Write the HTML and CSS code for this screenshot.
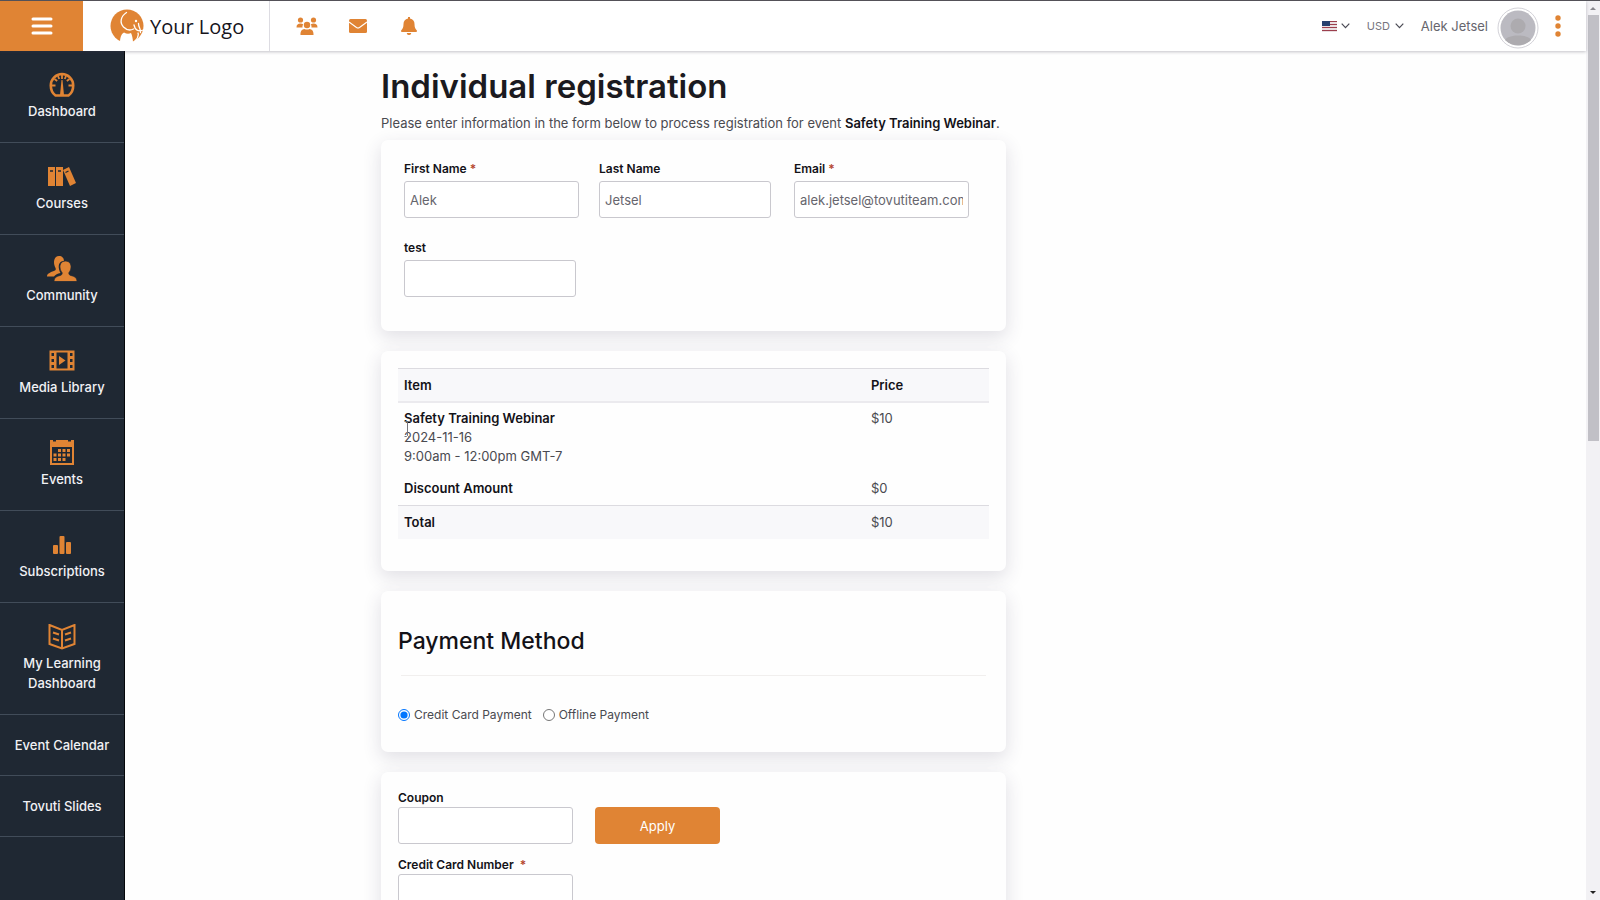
FILE: index.html
```html
<!DOCTYPE html>
<html lang="en">

<head>
  <meta charset="UTF-8">
  <meta name="viewport" content="width=device-width, initial-scale=1.0">
  <title>Individual registration</title>
  <link rel="stylesheet" href="styles.css">
</head>

<body>
  <div class="app">
    <header class="topbar">
      <button class="menu-toggle" type="button" aria-label="Menu">
        <svg width="22" height="20" viewBox="0 0 22 20" stroke="#fff" stroke-width="3" stroke-linecap="round">
          <path d="M2 3h18M2 10h18M2 17h18" />
        </svg>
      </button>
      <a class="logo" href="#">
        <svg width="34" height="34" viewBox="0 0 34 34">
          <circle cx="17" cy="17" r="16.500" fill="#e08434" />
          <path d="M10 34c0-5 1-9 4-10.500 2.500 1.500 5 1.500 7 .500 1 2 2 6 2 10z" fill="#fff" />
          <path d="M16.500 3.500c-6 4-7 10-3 14.500 3 3 7 3.500 10 2" fill="none" stroke="#fff" stroke-width="1.300" stroke-linecap="round" />
          <path d="M24 16c1 5 4 7 9.500 5M28.500 14.500c0 4 2.500 5.500 2 9M28 24c1 3 0 5-3 8" fill="none" stroke="#fff" stroke-width="1.300" stroke-linecap="round" />
          <circle cx="26" cy="12" r="1.200" fill="#fff" />
        </svg>
        <span>Your Logo</span>
      </a>
      <nav class="shortcuts">
        <a href="#" aria-label="People">
          <svg width="22" height="18" viewBox="0 0 22 18" fill="#e08434">
            <circle cx="4.500" cy="3" r="2.600" />
            <circle cx="17.500" cy="3" r="2.600" />
            <path d="M.500 10.500c0-3 1.500-4 4-4 1 0 2 .200 2.800.900-.900 1-1 2.200-.700 3.100zM21.500 10.500c0-3-1.500-4-4-4-1 0-2 .200-2.800.900.900 1 1 2.200.700 3.100z" />
            <circle cx="11" cy="8" r="3.200" />
            <path d="M4.500 18c-.300-4 1.500-6 4-6.100 1.500.900 3.500.900 5 0 2.500.100 4.300 2.100 4 6.100z" />
          </svg>
        </a>
        <a href="#" aria-label="Messages">
          <svg width="18" height="14" viewBox="0 0 18 14">
            <rect width="18" height="14" rx="1.500" fill="#e08434" />
            <path d="M0 3l7.500 5.500q1.500 1 3 0L18 3" fill="none" stroke="#fff" stroke-width="1.100" />
          </svg>
        </a>
        <a href="#" aria-label="Notifications">
          <svg width="16" height="18" viewBox="0 0 16 18" fill="#e08434">
            <path d="M7 0h2v1.600c3 .600 4.500 2.800 4.500 5.400 0 3.500.800 4.800 2 6 .900.900.400 2-.700 2H1.200c-1.100 0-1.600-1.100-.700-2 1.200-1.200 2-2.500 2-6C2.500 4.400 4 2.200 7 1.600zM5.800 16h4.400c0 2.700-4.400 2.700-4.400 0z" />
          </svg>
        </a>
      </nav>
      <div class="account">
        <button class="language" type="button" aria-label="Language">
          <svg width="15" height="11" viewBox="0 0 15 11">
            <rect width="15" height="11" fill="#e9dfe2" />
            <path d="M0 .500h15M0 3.500h15M0 6.500h15M0 9.500h15" stroke="#9c3f4d" />
            <rect width="8" height="5" fill="#26406e" />
          </svg>
          <svg width="9" height="6" viewBox="0 0 9 6" fill="none" stroke="#4b4b55" stroke-width="1.200">
            <path d="M.700.700l3.800 4 3.800-4" />
          </svg>
        </button>
        <div class="currency">
          <select aria-label="Currency">
            <option>USD</option>
          </select>
          <svg width="9" height="6" viewBox="0 0 9 6" fill="none" stroke="#4b4b55" stroke-width="1.200">
            <path d="M.700.700l3.800 4 3.800-4" />
          </svg>
        </div>
        <a class="user" href="#">
          <span>Alek Jetsel</span>
          <svg class="avatar" width="42" height="42" viewBox="0 0 42 42">
            <circle cx="21" cy="21" r="20" fill="#fff" stroke="#d3d2d8" />
            <circle cx="21" cy="21" r="17.500" fill="#bbbac1" />
            <circle cx="21" cy="19" r="7.500" fill="#adabaf" />
            <path d="M8 33c3-6 23-6 26 0-7 7-19 7-26 0z" fill="#adabaf" />
          </svg>
        </a>
        <button class="more" type="button" aria-label="More">
          <svg width="6" height="22" viewBox="0 0 6 22" fill="#e08434">
            <circle cx="3" cy="3" r="2.700" />
            <circle cx="3" cy="11" r="2.700" />
            <circle cx="3" cy="19" r="2.700" />
          </svg>
        </button>
      </div>
    </header>

    <nav class="sidebar">
      <a href="#">
        <svg width="26" height="26" viewBox="0 0 26 26" fill="none" stroke="#e08434" stroke-width="2.600">
          <path d="M6.500 23.500C3 21 1.800 17 1.800 13.500 1.800 7 7 2 13 2s11.200 5 11.200 11.500c0 3.500-1.200 7.500-4.700 10z" />
          <path d="M13 3v4M3 13.500h3.500M19.500 13.500H23M5.500 7l2.700 2M20.500 7l-2.700 2M9 4l1.200 3M17 4l-1.200 3" stroke-width="1.800" />
          <path d="M12.500 8h1l1.500 15h-4z" fill="#e08434" stroke="none" />
        </svg>
        <span>Dashboard</span>
      </a>
      <a href="#">
        <svg width="28" height="26" viewBox="0 0 28 26">
          <g fill="#e08434">
            <rect x="0" y="3" width="7" height="19" />
            <rect x="8" y="3" width="7" height="19" />
            <path d="M15 6l6-3 7 16-6 3z" />
          </g>
          <path d="M2 7h3M10 7h3M17.500 8.500l3-1.500" stroke="#1f2833" stroke-width="1.300" />
        </svg>
        <span>Courses</span>
      </a>
      <a href="#">
        <svg width="30" height="26" viewBox="0 0 30 26">
          <path d="M12 0c3 0 5 2 5 5-4 0-6 3-5 8 .400 2 1 3 1.500 4-3 .500-5 1.500-6.500 3.500H0c0-3 3-4 8-6 1-.500 1-2 0-3.500C6 6 7 0 12 0z" fill="#e08434" />
          <path d="M18.500 5c4 0 6 3 5.500 7-.300 2-1.200 3.500-2 4.500-.500 2 .500 2.500 2 3 4 1 6 2.500 6 6H7c0-3.500 2-5 6-6 1.500-.500 2.500-1 2-3-.800-1-1.700-2.500-2-4.500-.500-4 1.500-7 5.500-7z" fill="#e08434" stroke="#1f2833" stroke-width=".800" />
        </svg>
        <span>Community</span>
      </a>
      <a href="#">
        <svg width="26" height="26" viewBox="0 0 26 26" fill="#e08434">
          <path fill-rule="evenodd" d="M.500 2.500h25v20H.500zM7.500 4.500v16h11v-16zM2.500 5v3H5V5zM2.500 11v3H5v-3zM2.500 17v3H5v-3zM21 5v3h2.500V5zM21 11v3h2.500v-3zM21 17v3h2.500v-3z" />
          <path d="M10 8l6.500 4.500L10 17z" />
        </svg>
        <span>Media Library</span>
      </a>
      <a href="#">
        <svg width="26" height="26" viewBox="0 0 26 26" fill="#e08434">
          <path fill-rule="evenodd" d="M1 0h3v1.500h3V0h12v1.500h3V0h3v25H1zM3 7v16h20V7z" />
          <path d="M9 9h3v3H9zM13.500 9h3v3h-3zM18 9h3v3h-3zM4.500 13.500h3v3h-3zM9 13.500h3v3H9zM13.500 13.500h3v3h-3zM18 13.500h3v3h-3zM4.500 18h3v3h-3zM9 18h3v3H9zM13.500 18h3v3h-3z" />
        </svg>
        <span>Events</span>
      </a>
      <a href="#">
        <svg width="26" height="26" viewBox="0 0 26 26" fill="#e08434">
          <rect x="4" y="13" width="5" height="9" rx="1" />
          <rect x="10.500" y="4" width="5" height="18" rx="1" />
          <rect x="17" y="10" width="5" height="12" rx="1" />
        </svg>
        <span>Subscriptions</span>
      </a>
      <a href="#">
        <svg width="28" height="26" viewBox="0 0 28 26" fill="none" stroke="#e08434" stroke-width="2">
          <path d="M1.500 1L14 6l12.500-5v19L14 24.500 1.500 20zM14 6v18.500" />
          <path d="M5 8.500l6 2M5 14.500l6 2M23 8.500l-6 2M23 14.500l-6 2" />
        </svg>
        <span>My Learning Dashboard</span>
      </a>
      <a class="text-only" href="#">Event Calendar</a>
      <a class="text-only" href="#">Tovuti Slides</a>
    </nav>

    <main class="content">
      <form class="registration">
        <h1>Individual registration</h1>
        <p class="intro">Please enter information in the form below to process registration for event <strong>Safety Training Webinar</strong>.</p>

        <section class="card details">
          <div class="field">
            <label for="first-name">First Name <span class="required">*</span></label>
            <input id="first-name" type="text" value="Alek">
          </div>
          <div class="field narrow">
            <label for="last-name">Last Name</label>
            <input id="last-name" type="text" value="Jetsel">
          </div>
          <div class="field">
            <label for="email">Email <span class="required">*</span></label>
            <input id="email" type="text" value="alek.jetsel@tovutiteam.com">
          </div>
          <div class="field narrow">
            <label for="test">test</label>
            <input id="test" type="text">
          </div>
        </section>

        <section class="card order">
          <table>
            <thead>
              <tr>
                <th>Item</th>
                <th class="price">Price</th>
              </tr>
            </thead>
            <tbody>
              <tr class="item">
                <td><strong>Safety Training Webinar</strong><br>2024-11-16<br>9:00am - 12:00pm GMT-7</td>
                <td>$10</td>
              </tr>
              <tr>
                <td><strong>Discount Amount</strong></td>
                <td>$0</td>
              </tr>
              <tr class="total">
                <td><strong>Total</strong></td>
                <td>$10</td>
              </tr>
            </tbody>
          </table>
          <svg class="text-cursor" width="7" height="16" viewBox="0 0 7 16" fill="none" stroke="#77767c">
            <path d="M.500.500h2l1 1 1-1h2M3.500 1.500v13M.500 15.500h2l1-1 1 1h2" />
          </svg>
        </section>

        <section class="card payment">
          <h2>Payment Method</h2>
          <hr>
          <div class="options">
            <label><input type="radio" name="method" checked>Credit Card Payment</label>
            <label><input type="radio" name="method">Offline Payment</label>
          </div>
        </section>

        <section class="card billing">
          <div class="coupon">
            <div class="field">
              <label for="coupon">Coupon</label>
              <input id="coupon" type="text">
            </div>
            <button class="apply" type="button">Apply</button>
          </div>
          <div class="field">
            <label for="card-number">Credit Card Number &nbsp;<span class="required">*</span></label>
            <input id="card-number" type="text">
          </div>
        </section>
      </form>
    </main>

    <div class="scrollbar">
      <span class="arrow-up"></span>
      <span class="thumb"></span>
      <span class="arrow-down"></span>
    </div>
  </div>
</body>

</html>
```

FILE: styles.css
```css
* {
  box-sizing: border-box;
}

body {
  margin: 0;
  background: #fefefe;
  font-family: Inter, Arial, sans-serif;
  font-size: 13px;
  line-height: 19px;
  color: #4a4a50;
  overflow: hidden;
}

a {
  color: inherit;
  text-decoration: none;
}

button {
  border: none;
  background: none;
  padding: 0;
  font-family: inherit;
  cursor: pointer;
}

svg {
  display: block;
  flex: none;
}

.app {
  display: grid;
  grid-template-columns: 125px 1fr 14px;
  grid-template-rows: 50px 1fr;
  height: 100vh;
  border-top: 1px solid #55545a;
}

.topbar {
  grid-column: 1 / 3;
  display: flex;
  background: #fff;
  box-shadow: 0 1px 3px rgba(60, 55, 75, 0.3);
  z-index: 2;
}

.menu-toggle {
  display: flex;
  align-items: center;
  justify-content: center;
  width: 83px;
  background: #e08434;
}

.logo {
  display: flex;
  align-items: center;
  gap: 6px;
  padding: 0 25px 0 27px;
  border-right: 1px solid #dddce2;
  font-family: "Open Sans", sans-serif;
  font-size: 20px;
  color: #16151c;
}

.shortcuts {
  display: flex;
  align-items: center;
  padding-left: 11px;
}

.shortcuts a {
  display: flex;
  justify-content: center;
  width: 51px;
}

.account {
  display: flex;
  align-items: center;
  margin-left: auto;
  padding-right: 25px;
}

.language,
.currency {
  display: flex;
  align-items: center;
  gap: 4px;
  margin-right: 17px;
}

.currency select {
  appearance: none;
  border: none;
  padding: 0;
  background: none;
  font-family: inherit;
  font-size: 11px;
  color: #77767e;
}

.user {
  display: flex;
  align-items: center;
  gap: 9px;
  margin-right: 16px;
  font-size: 13px;
  color: #66656d;
}

.avatar {
  margin-top: 4px;
}

.sidebar {
  display: flex;
  flex-direction: column;
  background: #1f2833;
  border-right: 1px solid #05070a;
  overflow: hidden;
}

.sidebar a {
  display: flex;
  flex: none;
  flex-direction: column;
  align-items: center;
  gap: 3px;
  padding: 21px 16px;
  border-bottom: 1px solid #414c59;
  font-size: 13px;
  font-weight: 500;
  line-height: 20px;
  text-align: center;
  color: #f1f1f5;
}

.sidebar .text-only {
  padding: 20px 4px;
}

.content {
  min-width: 0;
  overflow: hidden;
}

.registration {
  max-width: 949px;
  margin: 0 auto;
}

h1 {
  margin: 0;
  padding-top: 14px;
  font-size: 33px;
  font-weight: 600;
  line-height: 42px;
  color: #1b1a20;
}

.intro {
  margin: 7px 0;
}

strong {
  font-weight: 600;
  color: #131218;
}

.card {
  position: relative;
  max-width: 625px;
  margin-bottom: 20px;
  padding: 16px;
  border-radius: 7px;
  background: #fefefe;
  box-shadow: 0 6px 18px 1px rgba(60, 50, 85, 0.14);
}

.field label {
  display: block;
  font-size: 12px;
  font-weight: 600;
  color: #131218;
}

.required {
  color: #b5452f;
}

.field input {
  display: block;
  width: 175px;
  height: 37px;
  padding: 0 5px;
  border: 1px solid #c9c8ce;
  border-radius: 3px;
  background: #fff;
  font-family: inherit;
  font-size: 13px;
  color: #66656d;
}

.details {
  display: flex;
  flex-wrap: wrap;
  gap: 20px;
  padding: 19px 20px 34px 23px;
}

.details .field {
  width: 175px;
}

.details .field input {
  width: 100%;
  margin-top: 3px;
}

.details .narrow input {
  width: 172px;
}

table {
  width: 100%;
  border-collapse: separate;
  border-spacing: 0;
}

th,
td {
  padding: 7px 6px;
  text-align: left;
  vertical-align: top;
}

th {
  padding: 7px 6px 6px;
  border-top: 1px solid #dcdbe0;
  border-bottom: 2px solid #ebeaee;
  background: #f8f8fa;
  font-weight: 600;
  color: #131218;
}

.price {
  width: 21%;
}

.item td {
  padding: 6px;
}

.total td {
  border-top: 1px solid #dcdbe0;
  background: #f8f8fa;
}

.order {
  padding: 17px 17px 32px;
}

/* mouse pointer resting over the item row */
.text-cursor {
  position: absolute;
  top: 70px;
  left: 23px;
}

.payment {
  padding: 32px 17px 28px;
}

h2 {
  margin: 0;
  font-size: 23px;
  font-weight: 500;
  line-height: 36px;
  color: #131218;
}

hr {
  margin: 16px 3px 29px;
  border: none;
  border-top: 1px solid #f1efee;
}

.options {
  display: flex;
  gap: 11px;
}

.options label {
  display: flex;
  align-items: center;
  gap: 4px;
  font-size: 12px;
}

.options input {
  width: 12px;
  height: 12px;
  margin: 0;
}

.billing {
  padding: 16px 17px 40px;
}

.coupon {
  display: flex;
  align-items: flex-end;
  gap: 22px;
  margin-bottom: 11px;
}

.apply {
  width: 125px;
  height: 37px;
  border-radius: 4px;
  background: #e08434;
  font-size: 13px;
  color: #fff;
}

.scrollbar {
  grid-column: 3;
  grid-row: 1 / 3;
  display: flex;
  flex-direction: column;
  align-items: center;
  padding: 6px 0;
  background: #f2f1f4;
}

.thumb {
  width: 11px;
  height: 48%;
  margin-top: 5px;
  background: #c1c0c6;
}

.arrow-up,
.arrow-down {
  border: 3px solid transparent;
  border-top-width: 0;
  border-bottom: 3px solid #88878d;
}

.arrow-down {
  margin-top: auto;
  border-top: 3px solid #222;
  border-bottom-width: 0;
}
```
